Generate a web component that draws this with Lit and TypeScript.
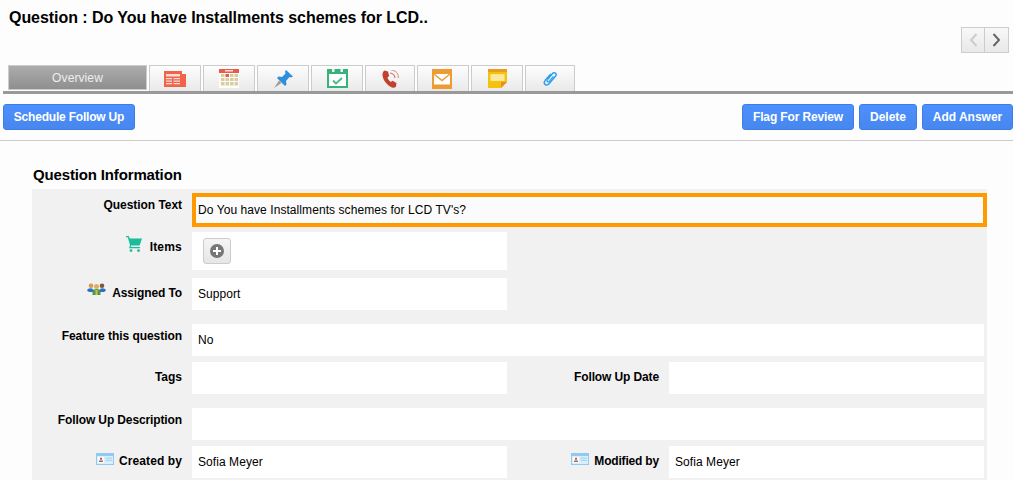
import { LitElement, html, css, svg } from "lit";
import { customElement } from "lit/decorators.js";

const tabIcons = [
  { w: 52, cls: "", size: [22, 16], icon: svg`<path d="M0 0h18v16H0z" fill="#f0644a"/><path d="M18 3h4v13h-4z" fill="#f0644a"/><path d="M2 3h14v2.500H2zM2 7h6v1.200H2zM9.500 7H16v1.200H9.500zM2 9.500h6v1.200H2zM9.500 9.500H16v1.200H9.500zM2 12h6v1.200H2zM9.500 12H16v1.200H9.500z" fill="#fbdcd5"/>` },
  { w: 52, cls: "", size: [20, 19], icon: svg`<path d="M0 0h20v19H0z" fill="#fdfdfb"/><path d="M0 0h20v4H0z" fill="#ea5a48"/><path d="M6 1.200h8v1.200H6z" fill="#fff"/><path d="M2 5h3.500v3H2zM11 5h3.500v3H11zM15.500 5H19v3h-3.500zM2 9h3.500v3H2zM6.500 9H10v3H6.500zM11 9h3.500v3H11zM15.500 9H19v3h-3.500zM2 13h3.500v3.500H2zM6.500 13H10v3.500H6.500zM11 13h3.500v3.500H11zM15.500 13H19v3.500h-3.500z" fill="#d9cda0"/><path d="M6.500 5H10v3H6.500z" fill="#ea5a48"/>` },
  { w: 52, cls: "", size: [19, 18], icon: svg`<path d="M0 18L5 10.500 7.500 13z" fill="#9c9c9c"/><path d="M12 0L19 6.500 17 7.500 15.500 7 12 11 12.500 14.500 11 16 3 8 4.500 6.500 8 7 11.500 3.500 11 1.500z" fill="#2f8fd8"/>` },
  { w: 52, cls: "", size: [21, 19], icon: svg`<path d="M0 0h21v19H0z" fill="#36b37a"/><path d="M2 5h17v12H2z" fill="#fff"/><path d="M5 0h2.500v3H5zM13.500 0H16v3h-2.500z" fill="#eafaf2"/><path d="M6 11.500l3 3 6-5.500" fill="none" stroke="#46bd85" stroke-width="1.800"/>` },
  { w: 50, cls: "", size: [17, 18], icon: svg`<path d="M2.500 0.500L6 1.500 7.200 6 5.500 7.500c.6 2 1.700 3.300 3.300 4.500l1.700-1.300 4 2.300-.5 3.500c-1 1.500-3.500 1.500-5.500.3C4.500 14.500 0.200 9 0.500 4 .7 2.500 1.500 1 2.500 0.500z" fill="#c2402e"/><path d="M8 3c2.800.3 4.700 2.300 5 5" fill="none" stroke="#cf7a6c" stroke-width="1.200"/><path d="M9 0c4.500.3 7.500 3.500 7.500 8" fill="none" stroke="#dca096" stroke-width="1.200"/>` },
  { w: 52, cls: "l1", size: [20, 20], icon: svg`<path d="M0 0h20v20H0z" fill="#ee9c32"/><path d="M2 5h16v10.500H2z" fill="#fff"/><path d="M2 5l8 6.500L18 5" fill="none" stroke="#ee9c32" stroke-width="1.400"/>` },
  { w: 52, cls: "", size: [19, 19], icon: svg`<path d="M0 0h19v13l-6 6H0z" fill="#f4c20d"/><path d="M0 0h19v3H0z" fill="#ee9c1e"/><path d="M2.500 5h14v7h-14z" fill="#fbe38a"/><path d="M2.500 6.800h14M2.500 8.800h14M2.500 10.800h14" stroke="#fff3c4" stroke-width=".7"/><path d="M19 13h-6v6z" fill="#ee8a1e"/>` },
  { w: 50, cls: "", size: [14, 15], icon: svg`<path d="M4.500 8.500L9.500 2.500c1-1.300 3-.9 3.500.3.400 1-.1 2-.8 2.800L6 12.800c-1.300 1.600-3.500 1.400-4.300.2-.7-1-.5-2.300.4-3.400L7.800 3" fill="none" stroke="#2b9ff0" stroke-width="1.500"/><path d="M4.500 8.500c-.8 1-.5 2 .1 2.300.6.300 1.200 0 1.800-.7l4-4.800" fill="none" stroke="#2b9ff0" stroke-width="1.300"/>` },
];

const cardIcon = html`<svg class="ic card" width="18" height="12" viewBox="0 0 18 12">
  <path d="M0 0h18v12H0z" fill="#8fcaf5"/><path d="M1 3h16v8H1z" fill="#dceefb"/>
  <path d="M2 4h6v6H2z" fill="#fdfdfd"/><path d="M4 4.800h2v2H4z" fill="#d4533e"/><path d="M3 7.500h4v1.500H3z" fill="#8a6f5d"/>
  <path d="M9.500 4.500H16v1.200H9.500zM9.500 6.800H16V8H9.500z" fill="#a8d5f5"/></svg>`;

const cartIcon = html`<svg class="ic cart" width="16" height="16" viewBox="0 0 16 16">
  <path d="M0 0h2.600l1.200 2.500H16l-2.400 7H5.200l-.5 1.500H14v1.200H3l1-3L1.800 1.300H0z" fill="#1abc9c"/>
  <circle cx="5" cy="14.600" r="1.400" fill="#1abc9c"/><circle cx="12.500" cy="14.600" r="1.400" fill="#1abc9c"/></svg>`;

const peopleIcon = html`<svg class="ic people" width="19" height="12" viewBox="0 0 19 12">
  <path d="M0 7.500c.5-1.500 2-2.300 3.500-2.300S6 6 7 7.500V9H2z" fill="#2f6fc0"/>
  <path d="M12 7.500c1-1.500 2-2.300 3.500-2.300S18.500 6 19 7.500L17 9h-5z" fill="#2f6fc0"/>
  <circle cx="4" cy="2.800" r="2.300" fill="#d69a52"/><circle cx="15" cy="2.800" r="2.300" fill="#7b5a3c"/>
  <path d="M5.500 12V8.500c0-1.500 2-2.500 4-2.500s4 1 4 2.500V12z" fill="#3f9d5a"/>
  <circle cx="9.500" cy="3.600" r="2.500" fill="#e2ad62"/><path d="M8.500 7h2v5h-2z" fill="#e8b93e"/></svg>`;

@customElement("app-root")
export class AppRoot extends LitElement {
  static styles = css`
    :host { display: block; height: 480px; overflow: hidden; background: #fdfdfd; font-family: "Liberation Sans", Arial, sans-serif; font-size: 12px; color: #000; }
    .head { height: 65px; position: relative; padding: 9px 0 0 9px; box-sizing: border-box; }
    h1 { margin: 0; font-size: 16px; line-height: 18px; font-weight: bold; letter-spacing: -0.055px; }
    .nav { position: absolute; left: 961px; top: 27px; display: flex; height: 26px; box-sizing: border-box; border: 1px solid #ccc; background: linear-gradient(#f8f8f8, #e8e8e8); }
    .nav div { width: 22px; display: flex; align-items: center; justify-content: center; }
    .nav div + div { border-left: 1px solid #ccc; width: 23px; }
    .tabs { display: flex; gap: 2px; padding-left: 8px; height: 26px; }
    .tab { box-sizing: border-box; display: flex; align-items: center; justify-content: center; height: 26px; border: 1px solid #ccc; border-bottom: 0; background: linear-gradient(#fdfdfd, #e9e9e9); }
    .tab.l1 { padding-right: 2px; }
    .tab.on { width: 139px; height: 25px; background: linear-gradient(#acacac, #8f8f8f); color: #eee; border-bottom: 1px solid #ccc; letter-spacing: 0.1px; }
    .rule { height: 3px; margin-left: 3px; background: #999; }
    .bar { display: flex; gap: 5px; height: 26px; margin-top: 10px; padding-left: 3px; }
    .sp { flex: 1; }
    button { font: bold 12px "Liberation Sans", Arial, sans-serif; color: #fff; height: 26px; padding: 0; box-sizing: border-box; border: 1px solid #3b7eea; border-radius: 3px; background: linear-gradient(#4d90fe, #4787ed); }
    .b1 { width: 132px; letter-spacing: -0.2px; }
    .b2 { width: 112px; letter-spacing: -0.13px; }
    .b3 { width: 58px; }
    .b4 { width: 91px; }
    .line { height: 1px; margin-top: 10px; background: #ccc; }
    h2 { margin: 0; height: 48px; box-sizing: border-box; padding: 25px 0 0 33px; font-size: 15px; line-height: 17px; font-weight: bold; letter-spacing: -0.15px; }
    .panel { margin-left: 32px; width: 955px; height: 300px; background: #f1f1f1; padding-top: 4px; box-sizing: border-box; }
    .row { display: grid; grid-template-columns: 160px 315px 162px 315px; height: 32px; margin-top: 6px; }
    .row.far { margin-top: 14px; }
    .row.first { margin-top: 0; height: 34px; }
    .row.tall { height: 38px; margin-top: 5px; }
    .row.third { margin-top: 8px; }
    .lab { font-weight: bold; line-height: 14px; padding: 8px 10px 0 0; text-align: right; display: flex; justify-content: flex-end; align-items: flex-start; }
    .lab.hi { padding-top: 5px; }
    .t1 { letter-spacing: -0.05px; }
    .t2 { letter-spacing: -0.12px; }
    .t3 { letter-spacing: -0.18px; }
    .p1 { letter-spacing: 0.1px; }
    .p2 { letter-spacing: 0.2px; }
    .ic { flex: none; }
    .cart { margin: -4px 8px 0 0; }
    .people { margin: -3px 6px 0 0; }
    .card { margin: -1px 5px 0 0; }
    .val { background: #fff; padding-left: 6px; display: flex; align-items: center; letter-spacing: 0.07px; }
    .wide { grid-column: 2 / span 3; }
    .q { grid-column: 2 / span 3; margin-right: -3px; box-sizing: border-box; border: 4px solid #ff9900; background: #fbfbfb; padding-left: 2px; }
    .plus { width: 28px; height: 26px; margin-left: 5px; box-sizing: border-box; border: 1px solid #ccc; border-radius: 3px; background: linear-gradient(#f5f5f5, #e6e6e6); display: flex; align-items: center; justify-content: center; }
  `;

  private tab(t: { w: number; cls: string; size: number[]; icon: unknown }) {
    return html`<div class="tab ${t.cls}" style="width:${t.w}px"><svg width=${t.size[0]} height=${t.size[1]} viewBox="0 0 ${t.size[0]} ${t.size[1]}">${t.icon}</svg></div>`;
  }

  render() {
    return html`
      <div class="head">
        <h1>Question : Do You have Installments schemes for LCD..</h1>
        <div class="nav">
          <div><svg width="9" height="14" viewBox="0 0 9 14"><path d="M7.500 1L2 7l5.500 6" fill="none" stroke="#ccc" stroke-width="2"/></svg></div>
          <div><svg width="9" height="14" viewBox="0 0 9 14"><path d="M1.500 1L7 7l-5.500 6" fill="none" stroke="#666" stroke-width="2"/></svg></div>
        </div>
      </div>
      <div class="tabs">
        <div class="tab on">Overview</div>
        ${tabIcons.map((t) => this.tab(t))}
      </div>
      <div class="rule"></div>
      <div class="bar">
        <button class="b1">Schedule Follow Up</button>
        <div class="sp"></div>
        <button class="b2">Flag For Review</button>
        <button class="b3">Delete</button>
        <button class="b4">Add Answer</button>
      </div>
      <div class="line"></div>
      <h2>Question Information</h2>
      <div class="panel">
        <div class="row first"><div class="lab hi t1">Question Text</div><div class="val q">Do You have Installments schemes for LCD TV's?</div></div>
        <div class="row tall"><div class="lab p2">${cartIcon}Items</div><div class="val"><div class="plus"><svg width="14" height="14" viewBox="0 0 14 14"><circle cx="7" cy="7" r="7" fill="#777"/><path d="M3 7h8M7 3v8" stroke="#fff" stroke-width="2"/></svg></div></div></div>
        <div class="row third"><div class="lab t2">${peopleIcon}Assigned To</div><div class="val">Support</div></div>
        <div class="row far"><div class="lab hi t1">Feature this question</div><div class="val wide">No</div></div>
        <div class="row"><div class="lab">Tags</div><div class="val"></div><div class="lab t2">Follow Up Date</div><div class="val"></div></div>
        <div class="row far"><div class="lab hi t2">Follow Up Description</div><div class="val wide"></div></div>
        <div class="row"><div class="lab p1">${cardIcon}Created by</div><div class="val">Sofia Meyer</div><div class="lab t3">${cardIcon}Modified by</div><div class="val">Sofia Meyer</div></div>
      </div>
    `;
  }
}
